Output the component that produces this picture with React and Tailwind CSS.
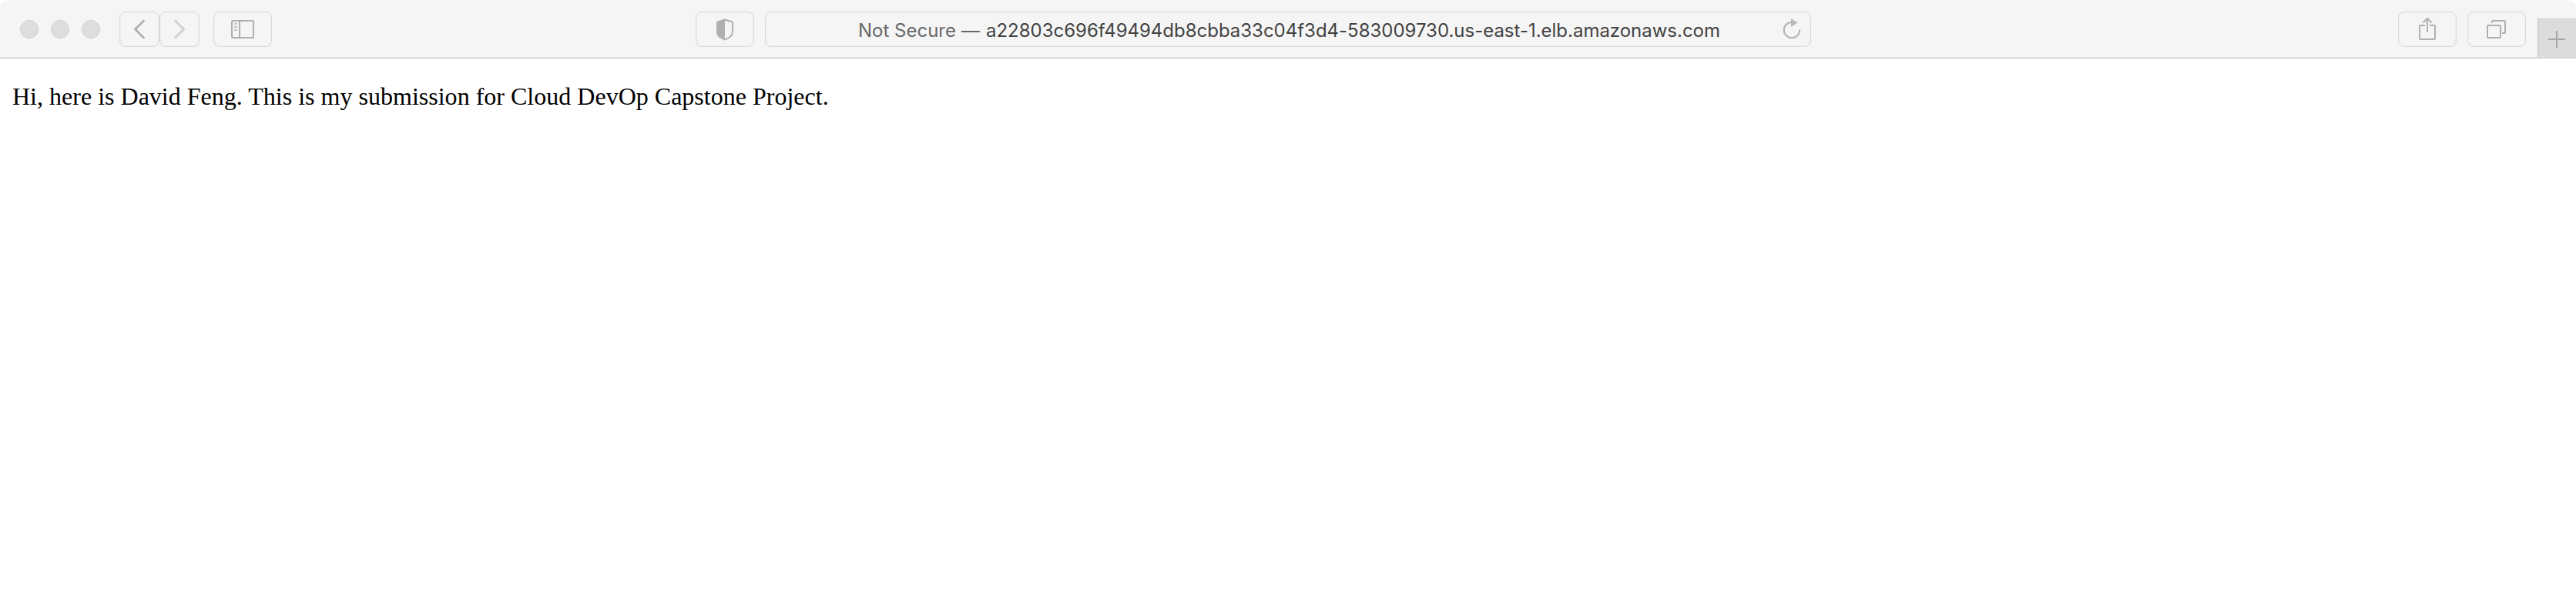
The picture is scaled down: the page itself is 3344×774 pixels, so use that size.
import React from "react";

function ToolButton({ className = "", children }) {
  return (
    <div className={`flex h-[46px] shrink-0 items-center justify-center rounded-[8px] border border-[#dadada] shadow-[inset_0_0_0_1px_#eeeeee] ${className}`}>
      {children}
    </div>
  );
}

function Light() {
  return <div className="size-6 rounded-full border border-[#d0d0d0] bg-[#dddddd]" />;
}

function Icon({ children }) {
  return (
    <svg width="40" height="44" viewBox="0 0 40 44" fill="none" stroke="#b0b0b0" strokeWidth="2" className="shrink-0">
      {children}
    </svg>
  );
}

export default function App() {
  return (
    <div className="h-[774px] w-[3344px] overflow-hidden bg-white">
      <header className="flex h-[76px] w-full items-start overflow-hidden rounded-t-[10px] border-t border-b border-t-[#fafafa] border-b-[#cbcbcb] bg-[#f5f5f5] shadow-[inset_0_-1px_0_#dfdfdf]">
        <div className="flex w-[903px] shrink-0 items-center pt-[14px] pl-[26px]">
          <div className="flex w-[129px] shrink-0 gap-4">
            <Light />
            <Light />
            <Light />
          </div>
          <ToolButton className="w-[52px]">
            <Icon>
              <path d="M25.500 11 14.500 22l11 11" strokeWidth="2.8" strokeLinecap="round" />
            </Icon>
          </ToolButton>
          <ToolButton className="w-[52px]">
            <Icon>
              <path d="m14.500 11 11 11-11 11" stroke="#d0d0d0" strokeWidth="2.8" strokeLinecap="round" />
            </Icon>
          </ToolButton>
          <ToolButton className="ml-[18px] w-[76px]">
            <Icon>
              <rect x="6" y="11" width="28" height="22" rx="1" />
              <path d="M16 11v22" />
              <path d="M9 15h4M9 19h4M9 23h4" stroke="#c4c4c4" />
            </Icon>
          </ToolButton>
        </div>
        <div className="flex shrink-0 gap-[14px] pt-[14px]">
          <ToolButton className="w-[76px]">
            <Icon>
              <path d="M20 9.500 10.700 12.500Q10 12.800 10 13.500V26Q10 31.500 20 35.500Q30 31.500 30 26V13.500Q30 12.800 29.300 12.500Z" strokeLinejoin="round" />
              <path d="M20 9 10 12.500V26Q10 31.500 20 36Z" fill="#b0b0b0" stroke="none" />
            </Icon>
          </ToolButton>
          <ToolButton className="relative w-[1358px]">
            <div className="flex w-full whitespace-pre pt-[3px] pl-[120px] font-['Inter','Liberation_Sans',sans-serif] text-[24px] leading-[30px]">
              <span className="w-[166px] shrink-0 text-[#686868]">Not Secure —</span>
              <span className="tracking-[-0.015px] text-[#424242]">a22803c696f49494db8cbba33c04f3d4-583009730.us-east-1.elb.amazonaws.com</span>
            </div>
            <div className="absolute top-0 right-[4px]">
              <Icon>
                <path d="M20 12.800A10.200 10.200 0 1 0 30.200 22.500" stroke="#b8b8b8" strokeWidth="2.2" />
                <path d="m19 8 8.500 5.500L19 19Z" fill="#b8b8b8" stroke="none" />
              </Icon>
            </div>
          </ToolButton>
        </div>
        <div className="ml-auto flex shrink-0">
          <div className="flex gap-[14px] pt-[14px] pr-[15px]">
            <ToolButton className="w-[76px]">
              <Icon>
                <path d="M17 17h-6q-1 0-1 1v16q0 1 1 1h18q1 0 1-1V18q0-1-1-1h-6M20 26V8M14.500 13.500 20 8l5.500 5.500" />
              </Icon>
            </ToolButton>
            <ToolButton className="w-[76px]">
              <Icon>
                <rect x="8" y="17" width="17" height="16" rx="1" />
                <path d="M14 14v-2q0-1 1-1h15q1 0 1 1v14q0 1-1 1h-3" />
              </Icon>
            </ToolButton>
          </div>
          <div className="mt-[23px] flex h-[50px] w-[50px] items-center justify-center border-t border-l-2 border-[#d0d0d0] bg-[#dcdcdc] pt-[3px] pr-[2px]">
            <svg width="22" height="22" viewBox="0 0 22 22" stroke="#a6a6a6" strokeWidth="2">
              <path d="M11 0v22M0 11h22" />
            </svg>
          </div>
        </div>
      </header>
      <main className="px-4 pt-[31px] font-['Liberation_Serif',serif] text-[32px] leading-[36px] tracking-[0.01px] text-black">
        <p>Hi, here is David Feng. This is my submission for Cloud DevOp Capstone Project.</p>
      </main>
    </div>
  );
}
